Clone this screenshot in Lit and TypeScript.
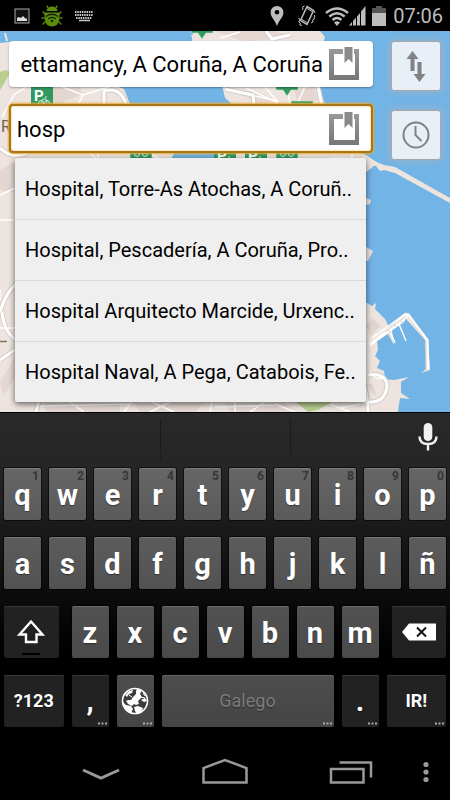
import { LitElement, html, svg, css, nothing } from "lit";
import { customElement, property } from "lit/decorators.js";

type Key = {
  label: string;
  hint?: string;
  kind?: "letter" | "word" | "shift" | "delete" | "globe" | "space" | "mark";
  span?: number;
  dark?: boolean;
  more?: boolean;
  name?: string;
};

const SUGGESTIONS = [
  "Hospital, Torre-As Atochas, A Coruñ..",
  "Hospital, Pescadería, A Coruña, Pro..",
  "Hospital Arquitecto Marcide, Urxenc..",
  "Hospital Naval, A Pega, Catabois, Fe..",
];

const letters = (s: string): Key[] => [...s].map((label) => ({ label }));

const ROWS: Key[][] = [
  letters("qwertyuiop").map((k, i) => ({ ...k, hint: String((i + 1) % 10) })),
  letters("asdfghjklñ"),
  [
    { label: "", kind: "shift", span: 3, dark: true, name: "Shift" },
    ...letters("zxcvbnm"),
    { label: "", kind: "delete", span: 3, dark: true, name: "Delete" },
  ],
  [
    { label: "?123", kind: "word", span: 3, dark: true },
    { label: ",", kind: "mark", dark: true, more: true },
    { label: "", kind: "globe", more: true, name: "Change language" },
    { label: "Galego", kind: "space", span: 8, more: true },
    { label: ".", kind: "mark", dark: true, more: true },
    { label: "IR!", kind: "word", span: 3, dark: true, more: true },
  ],
];

@customElement("status-bar")
export class StatusBar extends LitElement {
  static styles = css`
    :host {
      display: flex;
      align-items: center;
      height: 31px;
      padding: 0 7px 0 14px;
      background: #000;
      color: #bdbdbd;
      font: 20px/31px Roboto, "Liberation Sans", sans-serif;
    }
    .group {
      display: flex;
      align-items: center;
    }
    .left {
      gap: 11px;
    }
    .right {
      margin-left: auto;
    }
    .pin {
      margin-right: 14px;
    }
    .vibrate {
      margin-right: 9px;
    }
    .battery {
      margin: 0 7px 0 6px;
    }
    svg {
      display: block;
    }
    time {
      padding-top: 2px;
    }
  `;

  render() {
    return html`
      <div class="group left">
        <svg width="16" height="16" viewBox="0 0 16 16">
          <rect x="1" y="1" width="14" height="14" fill="#111" stroke="#aaa" />
          <path d="M3 13V10l2-1 2 1 2-2 3 3 1-1v3z" fill="#ddd" />
        </svg>
        <svg width="22" height="22" viewBox="0 0 22 22">
          <g stroke="#5d8c0a" stroke-width="1.3" fill="none">
            <path d="M7 3 6 .5M15 3l1-2.500M4 9 1.500 6.500M18 9l2.500-2.500M3 13H.5M19 13h2.500M4 17l-2.500 2.500M18 17l2.500 2.500" />
          </g>
          <path d="M5.500 6a5.500 4.500 0 0 1 11 0z" fill="#5d8c0a" />
          <path d="M3.500 7.500h15v6a7.500 8 0 0 1-15 0z" fill="#5d8c0a" />
          <g stroke="#16240a" fill="none" stroke-width="1.300">
            <path d="M5 11.500q6-4.500 12 0M7 14q4-3 8 0" />
          </g>
          <circle cx="11" cy="16" r="1.300" fill="#16240a" />
        </svg>
        <svg width="20" height="12" viewBox="0 0 20 12">
          <g stroke="#c8c8c8" stroke-width="2" fill="none" stroke-dasharray="1.500 .8">
            <path d="M1 2h18M1 5h18M2 8h16" />
          </g>
          <path d="M5 10.500h11" stroke="#c8c8c8" stroke-width="1.500" />
        </svg>
      </div>
      <div class="group right">
        <svg class="pin" width="14" height="22" viewBox="0 0 14 22">
          <path fill="#bdbdbd" fill-rule="evenodd" d="M7 1a6.400 6.400 0 0 1 6.400 6.400C13.400 12 9 15 7 21 5 15 .6 12 .6 7.400A6.400 6.400 0 0 1 7 1zm0 4a2.300 2.300 0 1 0 0 4.600A2.300 2.300 0 0 0 7 5z" />
        </svg>
        <svg class="vibrate" width="18" height="22" viewBox="0 0 18 22">
          <g fill="none" stroke="#bdbdbd">
            <path stroke-width="1.500" d="M9 1.500 15.500 5.500 9 19.500 2.500 15.500z" />
            <path d="M9 3.500 14 6.500M4 14.500l5 3" />
            <path d="M.8 13l1 2-1 2 1.500 1-.5 2 2 .5M17.200 8l-1-2M16 10l1 1-1 2 .5 1-2 1 .5 2-2 1M4 5l1-1-.5-2 2-1" />
          </g>
        </svg>
        <svg width="24" height="20" viewBox="0 0 24 20">
          <g fill="none" stroke="#bdbdbd" stroke-width="2.600">
            <path d="M1 7q11-9 22 0M4.300 10.500q7.700-6.500 15.400 0M7.600 13.900q4.400-3.800 8.800 0" />
          </g>
          <path d="M12 20 9 16.500q3-2.300 6 0z" fill="#bdbdbd" />
        </svg>
        <svg width="17" height="22" viewBox="0 0 17 22">
          <path d="M0 20.500 3 17V20.500zM4 20.500v-4.500l3-3.500v8zM8 20.500v-9l3-3.500V20.500zM12 20.500V6.500L16.500 1v19.500z" fill="#bdbdbd" />
        </svg>
        <svg class="battery" width="14" height="22" viewBox="0 0 14 22">
          <path d="M4 1h6v2h4v5H0V3h4z" fill="#555" />
          <path d="M0 8h14v13H0z" fill="#bdbdbd" />
        </svg>
        <time>07:06</time>
      </div>
    `;
  }
}

@customElement("city-map")
export class CityMap extends LitElement {
  static styles = css`
    :host,
    svg {
      display: block;
      width: 100%;
      height: 100%;
    }
    .town {
      font: 16px Roboto, "Liberation Sans", sans-serif;
    }
    .parking {
      font: bold 15px Roboto, "Liberation Sans", sans-serif;
    }
  `;

  private bike(x: number, y: number) {
    return svg`
      <g transform="translate(${x} ${y})">
        <path d="M0 0h22v18h-7l-4 6-4-6H0z" fill="#2f9960" stroke="#cfe3d5" stroke-width=".6" />
        <g fill="none" stroke="#d9f0e2">
          <circle cx="7" cy="12" r="2.500" /><circle cx="15" cy="12" r="2.500" />
          <path d="M7 12l3-4 4 0 1 4M10 8l2 4M13 6h2" />
        </g>
      </g>`;
  }

  private parking(x: number, y: number) {
    return svg`
      <g transform="translate(${x} ${y})">
        <path d="M0 0h22v24H0z" fill="#2f9960" />
        <text class="parking" x="3" y="14" fill="#fff">P</text>
        <g fill="none" stroke="#d9f0e2">
          <circle cx="10" cy="16" r="2.500" /><circle cx="16" cy="16" r="2.500" />
          <path d="M10 16l2-4 3 0 1 4M14 10h2" />
        </g>
      </g>`;
  }

  render() {
    return html`
      <svg viewBox="0 31 450 381" preserveAspectRatio="xMinYMin slice" aria-hidden="true">
        <rect y="31" width="450" height="381" fill="#72b4e5" />
        <path
          fill="#eee4df"
          d="M0 43 9 42 40 42 110 70 116 86 124 89 130 104 150 130 176 150 171 159H214L214 120 232 104 225 98 222 85 190 60 193 31H320L325 37 318 60 320 90 325 104 335 140 366 155 378 163 366 172V198L371 200 370 204 366 205V247L373 251 368 261H360V299L372 306 376 303 375 309 385 319 389 327 404 314 409 313 428 339 430 370 421 373 426 369 425 340 406 319 392 330 394 345 388 334 383 337 377 341 378 350 375 356 380 361 377 368 384 371 385 379 394 380 409 377 401 382 401 393 410 399 400 398 398 412H0z"
        />
        <path
          fill="#e4d7d1"
          d="M44 86h36l2 8-22 10H52zM250 90l24 12-18 2-10-8zM294 90l20-3 4 12-8 5h-12zM0 382l16-26v20L4 396zM45 403h75v9H45zM135 403h70l-10 9h-55zM225 403h60l10 9h-65zM0 170l14-8v30L0 190zM215 31h60l20 6-50 5z"
        />
        <path d="M366 158 384 165 395 167 450 198V203L395 173 384 170 380 171 376 166 366 163z" fill="#eee4df" />
        <path d="M0 72q8-4 10 1-6 11-10 17zM296 402h36l-14 8-10 2z" fill="#b9cf90" />
        <path d="M5 33l2 8M194 40l-2-5" stroke="#eee4df" stroke-width="2" />
        <g fill="none" stroke="#d3ccc7" stroke-width="5">
          <path d="M0 148q12 12 28 5M104 106V91q16-5 22 13M225 89l18 4 10 2 1 10M266 31l6 8 18-4M318 86l4 20M0 312q6-20 16-28M2 312q2 20 14 28M0 360l16-11M360 372q8 20 8 40M365 402q22 2 22-18-3-12-19-9M36 412l3-11" />
        </g>
        <g fill="none" stroke="#fff" stroke-width="3">
          <path d="M0 148q12 12 28 5M104 106V91q16-5 22 13M225 89l18 4 10 2 1 10M266 31l6 8 18-4M318 86l4 20M0 312q6-20 16-28M2 312q2 20 14 28M0 360l16-11M360 372q8 20 8 40M365 402q22 2 22-18-3-12-19-9M36 412l3-11" />
        </g>
        <g fill="none" stroke="#fff" stroke-width="1.500">
          <path d="M0 195l15-7M0 220h16M0 328h16M0 300v-10M2 117l12-22 12-8M60 86l23 9 26-8M83 95l-5 9M246 88l32 15M265 87l12 14-22-5M285 87l6 17M305 87l-8 17M220 38l20-6M40 406l90-2M70 402l14 10M132 402l-8 10M152 402l22 10M170 402l-20 10M212 402l-2 10M235 402v10M215 407l60-2M265 402l-15 10M275 404l20 8M330 404l20 8M340 408l20-4" />
          <path d="M90 153l8 8M98 153v8M150 153l10 6M352 153v8M330 158h20" />
          <path d="M370 345 407 315 427 340 428 369" stroke-width="3" />
          <path d="M372 338 405 314 404 321 376 341M390 331l5 12M399 324l7 17M370 372q4 8 14 6" />
        </g>
        <g fill="none" stroke="#d9cbc5">
          <path d="M385 332 406 316M408 317l18 24v28M388 329l3 4M394 324l3 4M400 320l3 4" />
        </g>
        <path d="M0 341.500h7" stroke="#84715a" stroke-width="1.500" />
        <path d="M366 326l7-8 7 8-9 10zM368 385l4 8 5 4-5-14z" fill="#e1d5cf" />
        <text class="town" x="1" y="132" fill="#6c6152">R</text>
        ${this.parking(31, 87)} ${this.bike(191, 15)} ${this.bike(276, 72)}
        ${this.bike(291, 101)} ${this.bike(130, 142)} ${this.parking(214, 147)}
        ${this.parking(245, 147)} ${this.bike(276, 142)}
      </svg>
    `;
  }
}

@customElement("search-panel")
export class SearchPanel extends LitElement {
  static styles = css`
    :host {
      display: grid;
      grid-template-columns: minmax(0, 1fr) 50px;
      gap: 18px;
      align-items: start;
      position: relative;
      padding: 10px 9px;
      font-family: Roboto, "Liberation Sans", sans-serif;
      overflow: hidden;
    }
    .map {
      position: absolute;
      inset: 0;
    }
    .fields,
    .actions {
      position: relative;
      display: flex;
      flex-direction: column;
    }
    .actions {
      gap: 19px;
    }
    .field {
      box-sizing: border-box;
      display: flex;
      align-items: center;
      height: 46px;
      padding: 0 14px 0 7px;
      background: #fff;
      border-radius: 4px;
      box-shadow: 0 1px 2px #0005;
    }
    .field.active {
      height: 49px;
      margin-top: 17px;
      padding: 0 12px 0 6px;
      border: 2px solid #a87612;
      box-shadow: 0 0 2px 1px #e6ab3c, inset 0 0 2px #e6ab3c;
    }
    input {
      flex: 1;
      min-width: 0;
      height: 40px;
      padding: 2px 0 0;
      border: 0;
      outline: 0;
      background: none;
      color: #000;
      font: 22px/40px Roboto, "Liberation Sans", sans-serif;
    }
    .from {
      text-align: right;
    }
    .mark {
      display: flex;
      margin-left: 6px;
      padding: 0;
      border: 0;
      background: none;
    }
    .list {
      margin: 5px 7px 0 6px;
      padding: 0;
      list-style: none;
      background: #efefef;
      border-radius: 2px;
      box-shadow: 0 2px 6px #0009;
    }
    .item + .item {
      box-shadow: inset 0 1px #dadada;
    }
    .choice {
      display: block;
      width: 100%;
      height: 61px;
      padding: 2px 10px 0;
      border: 0;
      background: none;
      color: #000;
      font: 20px/59px Roboto, "Liberation Sans", sans-serif;
      text-align: left;
      white-space: nowrap;
      overflow: hidden;
    }
    .action {
      display: grid;
      place-items: center;
      height: 50px;
      padding: 0;
      border: 1px solid #a5a8ab;
      border-radius: 3px;
      background: #e8eff6;
      box-shadow: 0 0 6px 1px #b9b4b499;
    }
  `;

  private bookmark() {
    return html`<svg width="30" height="34" viewBox="0 0 30 34" aria-hidden="true">
      <defs>
        <linearGradient id="g" x2="0" y2="1">
          <stop stop-color="#999" />
          <stop offset="1" stop-color="#777" />
        </linearGradient>
      </defs>
      <path fill="url(#g)" fill-rule="evenodd" d="M0 2h30v31H0zM5 7v21h21V7z" />
      <path d="M14 0H25v15H14z" fill="#fff" />
      <path d="M15.500 0h8v16l-4-4-4 4z" fill="#8a8a8a" />
    </svg>`;
  }

  render() {
    return html`
      <city-map class="map"></city-map>
      <div class="fields">
        <div class="field">
          <input class="from" aria-label="From" .value=${"ettamancy, A Coruña, A Coruña"} />
          <button class="mark" aria-label="Saved places">${this.bookmark()}</button>
        </div>
        <div class="field active">
          <input aria-label="To" .value=${"hosp"} />
          <button class="mark" aria-label="Saved places">${this.bookmark()}</button>
        </div>
        <ul class="list">
          ${SUGGESTIONS.map(
            (text) => html`<li class="item"><button class="choice">${text}</button></li>`
          )}
        </ul>
      </div>
      <div class="actions">
        <button class="action" aria-label="Swap">
          <svg width="20" height="32" viewBox="0 0 20 32">
            <path d="M6.500 1 12.500 9H8.500V21H4.500V9H.5zM13.500 32 7.500 24H11.500V12H15.500V24H19.500z" fill="#808285" />
            <path d="M10 10v13" stroke="#e8eff6" />
          </svg>
        </button>
        <button class="action" aria-label="Time">
          <svg width="28" height="28" viewBox="0 0 28 28" fill="none" stroke="#808285" stroke-width="2">
            <circle cx="14" cy="14" r="12.500" />
            <path d="M13.500 5v9l6 6" />
          </svg>
        </button>
      </div>
    `;
  }
}

@customElement("key-cap")
export class KeyCap extends LitElement {
  @property({ attribute: false }) key!: Key;

  static styles = css`
    :host {
      display: block;
    }
    .cap {
      position: relative;
      display: grid;
      place-items: center;
      width: 100%;
      height: 52px;
      padding: 0;
      border: 0;
      border-radius: 2px;
      background: var(--cap);
      box-shadow: inset 0 1px #ffffff26, 0 0 0 1px #0008;
      color: #fff;
      font: bold 29px/52px Roboto, "Liberation Sans", sans-serif;
      text-shadow: 0 1px 1px #0006;
    }
    .letter {
      padding-top: 2px;
      line-height: 50px;
    }
    .dark {
      background: #222;
      box-shadow: inset 0 1px #383838;
    }
    .word {
      font-size: 18px;
    }
    .space {
      color: #7c7c7c;
      font-size: 18px;
      font-weight: 400;
    }
    .hint {
      position: absolute;
      top: 2px;
      right: 2px;
      color: #363636;
      font-size: 12px;
      line-height: 13px;
      text-shadow: none;
    }
    .more {
      position: absolute;
      right: 2px;
      bottom: 2px;
    }
    .lock {
      position: absolute;
      bottom: 3px;
      width: 18px;
      height: 2px;
      background: #000;
    }
  `;

  private face() {
    switch (this.key.kind) {
      case "shift":
        return html`<svg width="32" height="26" viewBox="0 0 32 26">
            <path d="M16 2.500 27.500 15.500H21.500V23H11V15.500H4.500z" fill="none" stroke="#fff" stroke-width="2.400" />
          </svg>
          <span class="lock"></span>`;
      case "delete":
        return html`<svg width="34" height="18" viewBox="0 0 34 18">
          <path d="M0 9 7 .5H34v17H7z" fill="#fff" />
          <path d="M15 4.500l9 9M24 4.500l-9 9" stroke="#111" stroke-width="2" />
        </svg>`;
      case "globe":
        return html`<svg width="28" height="28" viewBox="0 0 28 28">
          <circle cx="14" cy="14" r="12.500" fill="#3c3c3c" stroke="#fff" stroke-width="1.600" />
          <path
            fill="#fff"
            d="M16 1.500 21 3l-2 4 2 3-4 4 1 3-3 1-2-1-2 2-4-2-2-3 2-1 3 0 2-3 3-3 0-3zM2 15l3 3 5 1 2 3-2 4-4-3-4-4zM13 20l4-1 5 2-2 4-4 2-2-3zM20 13l4-2 2 3-3 1zM4 8l4-4 4-1-1 3-3 1-2 3z"
          />
          <path d="M22 6l2 3M8 8l3 2M19 10l5 1" stroke="#fff" />
        </svg>`;
      default:
        return this.key.label;
    }
  }

  render() {
    const k = this.key;
    return html`<button
      class="cap ${k.kind ?? "letter"} ${k.dark ? "dark" : ""}"
      aria-label=${k.name ?? nothing}
    >
      ${this.face()}
      ${k.hint ? html`<span class="hint">${k.hint}</span>` : nothing}
      ${k.more
        ? html`<svg class="more" width="9" height="3" viewBox="0 0 9 3">
            <path d="M0 .5h2v2H0zM3.500 .5h2v2h-2zM7 .5h2v2H7z" fill="#aaa" />
          </svg>`
        : nothing}
    </button>`;
  }
}

@customElement("soft-keyboard")
export class SoftKeyboard extends LitElement {
  static styles = css`
    :host {
      display: block;
      padding-bottom: 16px;
      background: linear-gradient(#292929, #252525 60px, #000 240px);
      box-shadow: inset 0 1px #000;
    }
    .strip {
      display: grid;
      grid-template-columns: 160fr 130fr 160fr;
      height: 40px;
      padding: 8px 0;
    }
    .slot + .slot {
      border-left: 1px solid #1c1c1c;
    }
    .voice {
      display: flex;
      align-items: flex-start;
      justify-content: flex-end;
      padding-right: 12px;
    }
    .mic {
      display: flex;
      padding: 2px 0 0;
      border: 0;
      background: none;
    }
    .rows {
      display: grid;
      gap: 17px;
    }
    .row {
      display: grid;
      grid-template-columns: repeat(20, 1fr);
    }
    .one {
      --cap: linear-gradient(#666, #5a5a5a);
    }
    .two {
      --cap: linear-gradient(#5c5c5c, #525252);
    }
    .three {
      --cap: linear-gradient(#525252, #4a4a4a);
    }
    .four {
      --cap: linear-gradient(#4d4d4d, #454545);
    }
    key-cap {
      grid-column: span 2;
      margin: 0 4px;
    }
    .wide {
      grid-column: span 3;
    }
    .bar {
      grid-column: span 8;
    }
    .three .wide:first-child {
      margin-right: 9px;
    }
    .three .wide:last-child {
      margin-left: 9px;
    }
  `;

  render() {
    const names = ["one", "two", "three", "four"];
    return html`
      <div class="strip">
        <div class="slot"></div>
        <div class="slot"></div>
        <div class="slot voice">
          <button class="mic" aria-label="Voice input">
            <svg width="20" height="30" viewBox="0 0 20 30">
              <rect x="5.700" y="1" width="8.600" height="18" rx="4.300" fill="#f2f2f2" />
              <path d="M1.500 14.500q0 7.500 8.500 7.500t8.500-7.500M10 22v6.500" fill="none" stroke="#f2f2f2" stroke-width="2.400" />
            </svg>
          </button>
        </div>
      </div>
      <div class="rows">
        ${ROWS.map(
          (row, i) => html`<div class="row ${names[i]}">
            ${row.map(
              (k) => html`<key-cap
                class=${k.span === 3 ? "wide" : k.span === 8 ? "bar" : ""}
                .key=${k}
              ></key-cap>`
            )}
          </div>`
        )}
      </div>
    `;
  }
}

@customElement("nav-bar")
export class NavBar extends LitElement {
  static styles = css`
    :host {
      display: grid;
      grid-template-columns: 38fr 125fr 124fr 128fr 21fr 14fr;
      align-items: center;
      height: 57px;
      background: #000;
    }
    .nav {
      display: grid;
      place-items: center;
      padding: 0;
      border: 0;
      background: none;
    }
    .back {
      grid-column: 2;
    }
  `;

  render() {
    return html`
      <button class="nav back" aria-label="Hide keyboard">
        <svg width="38" height="28" viewBox="0 0 38 28" fill="none" stroke="#999" stroke-width="3">
          <path d="M1 12 19 20 37 12" />
        </svg>
      </button>
      <button class="nav" aria-label="Home">
        <svg width="48" height="28" viewBox="0 0 48 28" fill="none" stroke="#999" stroke-width="2.500">
          <path d="M2.500 24.500V10L24 2 45.500 10V24.500z" />
        </svg>
      </button>
      <button class="nav" aria-label="Recent apps">
        <svg width="44" height="28" viewBox="0 0 44 28" fill="none" stroke="#999" stroke-width="2.500">
          <path d="M2 11h32.500v13.500H2zM10.500 4.500H42v15" />
        </svg>
      </button>
      <button class="nav" aria-label="More options">
        <svg width="6" height="22" viewBox="0 0 6 22" fill="#999">
          <circle cx="3" cy="3.500" r="2.600" /><circle cx="3" cy="11" r="2.600" /><circle cx="3" cy="18.500" r="2.600" />
        </svg>
      </button>
    `;
  }
}

@customElement("app-root")
export class AppRoot extends LitElement {
  static styles = css`
    :host {
      display: block;
      min-height: 100vh;
      background: #000;
    }
  `;

  render() {
    return html`
      <status-bar></status-bar>
      <search-panel></search-panel>
      <soft-keyboard></soft-keyboard>
      <nav-bar></nav-bar>
    `;
  }
}
